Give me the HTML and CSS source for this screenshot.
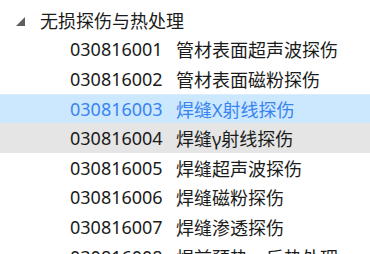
FILE: index.html
```html
<!DOCTYPE html>
<html lang="zh-CN">
<head>
<meta charset="utf-8">
<link rel="stylesheet" href="styles.css">
</head>
<body>
<div class="tree">
  <div class="row parent">
    <span class="toggle"></span>
    <span class="label">无损探伤与热处理</span>
  </div>
  <div class="row child"><span class="code">030816001</span><span class="name">管材表面超声波探伤</span></div>
  <div class="row child"><span class="code">030816002</span><span class="name">管材表面磁粉探伤</span></div>
  <div class="row child selected"><span class="code">030816003</span><span class="name">焊缝X射线探伤</span></div>
  <div class="row child hover"><span class="code">030816004</span><span class="name">焊缝γ射线探伤</span></div>
  <div class="row child"><span class="code">030816005</span><span class="name">焊缝超声波探伤</span></div>
  <div class="row child"><span class="code">030816006</span><span class="name">焊缝磁粉探伤</span></div>
  <div class="row child"><span class="code">030816007</span><span class="name">焊缝渗透探伤</span></div>
  <div class="row child"><span class="code">030816008</span><span class="name">焊前预热、后热处理</span></div>
</div>
</body>
</html>
```
FILE: styles.css
```css
html, body {
  margin: 0;
  padding: 0;
  background: #ffffff;
  overflow: hidden;
}
.tree {
  padding-top: 5px;
  font-family: "Noto Sans", "Noto Sans CJK SC", sans-serif;
  font-size: 18px;
  color: #1b1b1b;
}
.row {
  height: 29.6px;
  display: flex;
  align-items: center;
  white-space: nowrap;
  box-sizing: border-box;
}
.parent {
  padding-left: 16px;
}
.toggle {
  width: 0;
  height: 0;
  border-left: 9px solid transparent;
  border-bottom: 9px solid #5e5e5e;
  margin-right: 15px;
  margin-top: 3px;
}
.child {
  padding-left: 70px;
}
.code {
  width: 106px;
  flex: none;
}
.selected {
  background: #cce8ff;
  color: #3a84f0;
  border-top: 1px solid #d8eeff;
}
.hover {
  background: #e5e5e5;
}
```
